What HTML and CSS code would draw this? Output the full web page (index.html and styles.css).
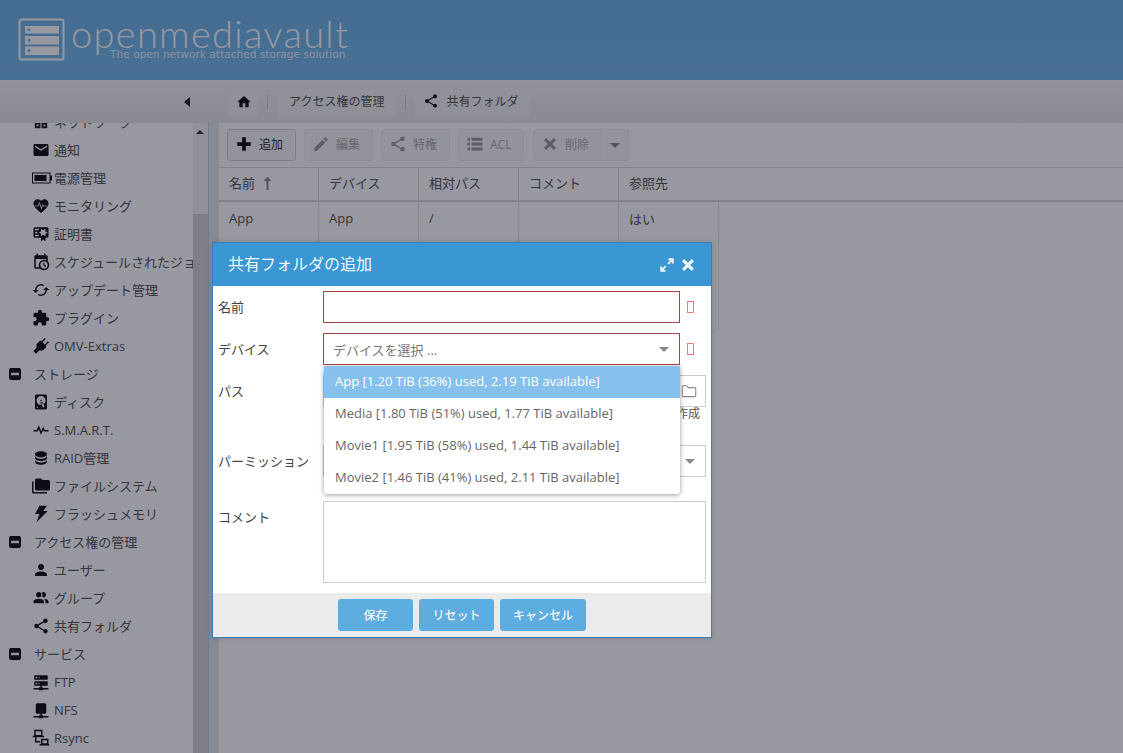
FILE: index.html
```html
<!DOCTYPE html>
<html lang="ja">
<head>
  <meta charset="UTF-8">
  <title>openmediavault</title>
  <link rel="stylesheet" href="styles.css">
</head>
<body>
  <svg class="sprite" aria-hidden="true">
    <symbol id="i-share" viewBox="0 0 24 24"><path d="M18,16.08C17.24,16.08 16.56,16.38 16.04,16.85L8.91,12.7C8.96,12.47 9,12.24 9,12C9,11.76 8.96,11.53 8.91,11.3L15.96,7.19C16.5,7.69 17.21,8 18,8A3,3 0 0,0 21,5A3,3 0 0,0 18,2A3,3 0 0,0 15,5C15,5.24 15.04,5.47 15.09,5.7L8.04,9.81C7.5,9.31 6.79,9 6,9A3,3 0 0,0 3,12A3,3 0 0,0 6,15C6.79,15 7.5,14.69 8.04,14.19L15.16,18.34C15.11,18.55 15.08,18.77 15.08,19C15.08,20.61 16.39,21.91 18,21.91C19.61,21.91 20.92,20.61 20.92,19A2.92,2.92 0 0,0 18,16.08Z"/></symbol>
    <symbol id="i-minus" viewBox="0 0 14 14"><path fill-rule="evenodd" d="M3,1H11A2,2 0 0,1 13,3V11A2,2 0 0,1 11,13H3A2,2 0 0,1 1,11V3A2,2 0 0,1 3,1ZM3,5.8V8.2H11V5.8Z"/></symbol>
    <symbol id="i-close" viewBox="0 0 24 24"><path d="M20 6.91L17.09 4L12 9.09L6.91 4L4 6.91L9.09 12L4 17.09L6.91 20L12 14.91L17.09 20L20 17.09L14.91 12L20 6.91Z"/></symbol>
  </svg>

  <!-- Header -->
  <header class="top-bar">
    <svg class="logo-mark" width="48" height="44" viewBox="0 0 48 44">
      <rect x="1.5" y="1.5" width="44" height="40" rx="2" fill="none" stroke="#fff" stroke-width="2"/>
      <path fill="#fff" fill-rule="evenodd" d="M7,8H41V15.5H7ZM11,10.2a1.5,1.5 0 1,0 .01,0ZM7,18H41V26.5H7ZM11,20.7a1.5,1.5 0 1,0 .01,0ZM7,28.5H41V37H7ZM11,31.2a1.5,1.5 0 1,0 .01,0Z"/>
    </svg>
    <div class="logo-text">
      <span class="logo-name">openmediavault</span>
      <span class="logo-tag">The open network attached storage solution</span>
    </div>
  </header>

  <div class="workspace">
    <!-- Sidebar -->
    <aside class="sidebar">
      <div class="collapse-bar"><span class="collapse-arrow"></span></div>
      <div class="nav-box">
        <ul class="nav-list">
          <li class="nav-item"><svg class="nav-icon" viewBox="0 0 24 24"><path fill="none" stroke="currentColor" stroke-width="2.4" d="M5 14h5v5H5zM14 14h5v5h-5z"/></svg><span>ネットワーク</span></li>
          <li class="nav-item"><svg class="nav-icon" viewBox="0 0 24 24"><path d="M20 4H4c-1.1 0-1.99.9-1.99 2L2 18c0 1.1.9 2 2 2h16c1.1 0 2-.9 2-2V6c0-1.1-.9-2-2-2zm0 4l-8 5-8-5V6l8 5 8-5v2z"/></svg><span>通知</span></li>
          <li class="nav-item"><svg class="nav-icon battery" viewBox="0 0 22 12"><path fill-rule="evenodd" d="M1,.5H19.5V3.5H21V8.5H19.5V11.5H1ZM2,1.5V10.5H18.5V1.5ZM3.5,3H15.5V9H3.5Z"/></svg><span>電源管理</span></li>
          <li class="nav-item"><svg class="nav-icon" viewBox="0 0 24 24"><path d="M12,21.35L10.55,20.03C5.4,15.36 2,12.27 2,8.5C2,5.41 4.42,3 7.5,3C9.24,3 10.91,3.81 12,5.08C13.09,3.81 14.76,3 16.5,3C19.58,3 22,5.41 22,8.5C22,12.27 18.6,15.36 13.45,20.03Z"/><path class="pulse-line" d="M3 12h5l2-4 2.5 7 2-4.5 1 1.5h5"/></svg><span>モニタリング</span></li>
          <li class="nav-item"><svg class="nav-icon" viewBox="0 0 24 24"><path d="M4,3C2.89,3 2,3.89 2,5V15A2,2 0 0,0 4,17H12V22L15,19L18,22V17H20A2,2 0 0,0 22,15V8L22,6V5A2,2 0 0,0 20,3H16V3H4M12,5L15,7L18,5V8.5L21,10L18,11.5V15L15,13L12,15V11.5L9,10L12,8.5V5M4,5H9V7H4V5M4,9H7V11H4V9M4,13H9V15H4V13Z"/></svg><span>証明書</span></li>
          <li class="nav-item"><svg class="nav-icon" viewBox="0 0 24 24"><path d="M15,13H16.5V15.82L18.94,17.23L18.19,18.53L15,16.69V13M19,8H5V19H9.67C9.24,18.09 9,17.07 9,16A7,7 0 0,1 16,9C17.07,9 18.09,9.24 19,9.67V8M5,21C3.89,21 3,20.1 3,19V5C3,3.89 3.89,3 5,3H6V1H8V3H16V1H18V3H19A2,2 0 0,1 21,5V11.1C22.24,12.36 23,14.09 23,16A7,7 0 0,1 16,23C14.09,23 12.36,22.24 11.1,21H5M16,11.15A4.85,4.85 0 0,0 11.15,16C11.15,18.68 13.32,20.85 16,20.85A4.85,4.85 0 0,0 20.85,16C20.85,13.32 18.68,11.15 16,11.15Z"/></svg><span>スケジュールされたジョブ</span></li>
          <li class="nav-item"><svg class="nav-icon" viewBox="0 0 24 24"><path transform="rotate(90 12 12)" d="M12,18A6,6 0 0,1 6,12C6,11 6.25,10.03 6.7,9.2L5.24,7.74C4.46,8.97 4,10.43 4,12A8,8 0 0,0 12,20V23L16,19L12,15M12,4V1L8,5L12,9V6A6,6 0 0,1 18,12C18,13 17.75,13.97 17.3,14.8L18.76,16.26C19.54,15.03 20,13.57 20,12A8,8 0 0,0 12,4Z"/></svg><span>アップデート管理</span></li>
          <li class="nav-item"><svg class="nav-icon" viewBox="0 0 24 24"><path d="M20.5,11H19V7C19,5.89 18.1,5 17,5H13V3.5A2.5,2.5 0 0,0 10.5,1A2.5,2.5 0 0,0 8,3.5V5H4A2,2 0 0,0 2,7V10.8H3.5C5,10.8 6.2,12 6.2,13.5C6.2,15 5,16.2 3.5,16.2H2V20A2,2 0 0,0 4,22H7.8V20.5C7.8,19 9,17.8 10.5,17.8C12,17.8 13.2,19 13.2,20.5V22H17A2,2 0 0,0 19,20V16H20.5A2.5,2.5 0 0,0 23,13.5A2.5,2.5 0 0,0 20.5,11Z"/></svg><span>プラグイン</span></li>
          <li class="nav-item latin"><svg class="nav-icon" viewBox="0 0 24 24"><path transform="rotate(45 12 12)" d="M16,7V1H14V7H10V1H8V7C7,7 6,8 6,9V14.5L9.5,18V24H14.5V18L18,14.5V9C18,8 17,7 16,7Z"/></svg><span>OMV-Extras</span></li>
          <li class="nav-item group"><svg class="group-icon"><use href="#i-minus"/></svg><span>ストレージ</span></li>
          <li class="nav-item"><svg class="nav-icon" viewBox="0 0 24 24"><path d="M6,2H18A2,2 0 0,1 20,4V20A2,2 0 0,1 18,22H6A2,2 0 0,1 4,20V4A2,2 0 0,1 6,2M12,4A6,6 0 0,0 6,10C6,13.31 8.69,16 12.1,16L11.22,13.77C10.95,13.29 11.11,12.68 11.59,12.4L12.45,11.9C12.93,11.63 13.54,11.79 13.82,12.27L15.74,14.69C17.12,13.59 18,11.9 18,10A6,6 0 0,0 12,4M12,9A1,1 0 0,1 13,10A1,1 0 0,1 12,11A1,1 0 0,1 11,10A1,1 0 0,1 12,9M7,18A1,1 0 0,0 6,19A1,1 0 0,0 7,20A1,1 0 0,0 8,19A1,1 0 0,0 7,18M12.09,13.27L14.58,19.58L17.17,18.08L12.95,12.77L12.09,13.27Z"/></svg><span>ディスク</span></li>
          <li class="nav-item latin"><svg class="nav-icon" viewBox="0 0 24 24"><path class="pulse-stroke" d="M2 13h5l2-5 3 8 3-6 1.5 3H22"/></svg><span>S.M.A.R.T.</span></li>
          <li class="nav-item"><svg class="nav-icon" viewBox="0 0 24 24"><path d="M12,3C7.58,3 4,4.79 4,7C4,9.21 7.58,11 12,11C16.42,11 20,9.21 20,7C20,4.79 16.42,3 12,3M4,9V12C4,14.21 7.58,16 12,16C16.42,16 20,14.21 20,12V9C20,11.21 16.42,13 12,13C7.58,13 4,11.21 4,9M4,14V17C4,19.21 7.58,21 12,21C16.42,21 20,19.21 20,17V14C20,16.21 16.42,18 12,18C7.58,18 4,16.21 4,14Z"/></svg><span>RAID管理</span></li>
          <li class="nav-item"><svg class="nav-icon" viewBox="0 0 24 24"><path d="M22,4H14L12,2H6A2,2 0 0,0 4,4V16A2,2 0 0,0 6,18H22A2,2 0 0,0 24,16V6A2,2 0 0,0 22,4M2,6H0V20A2,2 0 0,0 2,22H20V20H2V6Z"/></svg><span>ファイルシステム</span></li>
          <li class="nav-item"><svg class="nav-icon" viewBox="0 0 24 24"><path d="M10,1H20L15,8H21L6,23L10,12H4Z"/></svg><span>フラッシュメモリ</span></li>
          <li class="nav-item group"><svg class="group-icon"><use href="#i-minus"/></svg><span>アクセス権の管理</span></li>
          <li class="nav-item"><svg class="nav-icon" viewBox="0 0 24 24"><path d="M12,4A4,4 0 0,1 16,8A4,4 0 0,1 12,12A4,4 0 0,1 8,8A4,4 0 0,1 12,4M12,14C16.42,14 20,15.79 20,18V20H4V18C4,15.79 7.58,14 12,14Z"/></svg><span>ユーザー</span></li>
          <li class="nav-item"><svg class="nav-icon" viewBox="0 0 24 24"><path d="M16 17V19H2V17S2 13 9 13 16 17 16 17M12.5 7.5A3.5 3.5 0 1 0 9 11A3.5 3.5 0 0 0 12.5 7.5M15.94 13A5.32 5.32 0 0 1 18 17V19H22V17S22 13.37 15.94 13M15 4A3.39 3.39 0 0 0 13.07 4.59A5 5 0 0 1 13.07 10.41A3.39 3.39 0 0 0 15 11A3.5 3.5 0 0 0 15 4Z"/></svg><span>グループ</span></li>
          <li class="nav-item"><svg class="nav-icon"><use href="#i-share"/></svg><span>共有フォルダ</span></li>
          <li class="nav-item group"><svg class="group-icon"><use href="#i-minus"/></svg><span>サービス</span></li>
          <li class="nav-item latin"><svg class="nav-icon" viewBox="0 0 24 24"><path d="M13,19H14A1,1 0 0,1 15,20H22V22H15A1,1 0 0,1 14,23H10A1,1 0 0,1 9,22H2V20H9A1,1 0 0,1 10,19H11V17H4A1,1 0 0,1 3,16V12A1,1 0 0,1 4,11H20A1,1 0 0,1 21,12V16A1,1 0 0,1 20,17H13V19M4,3H20A1,1 0 0,1 21,4V8A1,1 0 0,1 20,9H4A1,1 0 0,1 3,8V4A1,1 0 0,1 4,3M9,7H10V5H9V7M9,15H10V13H9V15M5,5V7H7V5H5M5,13V15H7V13H5Z"/></svg><span>FTP</span></li>
          <li class="nav-item latin"><svg class="nav-icon" viewBox="0 0 24 24"><path d="M15,20A1,1 0 0,0 14,19H13V17H17A2,2 0 0,0 19,15V5A2,2 0 0,0 17,3H7A2,2 0 0,0 5,5V15A2,2 0 0,0 7,17H11V19H10A1,1 0 0,0 9,20H2V22H9A1,1 0 0,0 10,23H14A1,1 0 0,0 15,22H22V20H15Z"/></svg><span>NFS</span></li>
          <li class="nav-item latin"><svg class="nav-icon" viewBox="0 0 24 24"><path fill="none" stroke="currentColor" stroke-width="2" d="M4 2h9v7H4zM13 14h8v6h-8zM5 11v6h6"/><path d="M1 9h15v2H1zM10 20h13v2H10z"/></svg><span>Rsync</span></li>
        </ul>
        <div class="scrollbar">
          <span class="scroll-arrow"></span>
          <div class="scroll-thumb"></div>
        </div>
      </div>
    </aside>

    <!-- Main area -->
    <main class="main">
      <nav class="breadcrumb">
        <a class="crumb home"><svg width="16" height="16" viewBox="0 0 24 24"><path d="M10,20V14H14V20H19V12H22L12,3L2,12H5V20H10Z"/></svg></a>
        <span class="crumb-sep"></span>
        <a class="crumb">アクセス権の管理</a>
        <span class="crumb-sep"></span>
        <a class="crumb with-icon"><svg class="crumb-share" width="16" height="16"><use href="#i-share"/></svg>共有フォルダ</a>
      </nav>

      <section class="panel">
        <div class="toolbar">
          <button class="tool-btn"><svg width="18" height="18" viewBox="0 0 24 24"><path d="M21,14.5H14.5V21H9.5V14.5H3V9.5H9.5V3H14.5V9.5H21Z"/></svg>追加</button>
          <button class="tool-btn off"><svg width="18" height="18" viewBox="0 0 24 24"><path d="M20.71,7.04C21.1,6.65 21.1,6 20.71,5.63L18.37,3.29C18,2.9 17.35,2.9 16.96,3.29L15.12,5.12L18.87,8.87M3,17.25V21H6.75L17.81,9.93L14.06,6.18L3,17.25Z"/></svg>編集</button>
          <button class="tool-btn off"><svg width="18" height="18"><use href="#i-share"/></svg>特権</button>
          <button class="tool-btn off w-acl"><svg width="18" height="18" viewBox="0 0 24 24"><path d="M2 3.5h3.5v4H2zM7.5 3.5H22v4H7.5zM2 10h3.5v4H2zM7.5 10H22v4H7.5zM2 16.5h3.5v4H2zM7.5 16.5H22v4H7.5z"/></svg>ACL</button>
          <div class="tool-btn off split">
            <span class="split-main"><svg width="18" height="18"><use href="#i-close"/></svg>削除</span>
            <span class="split-arrow"><span class="caret"></span></span>
          </div>
        </div>

        <table class="grid">
          <thead>
            <tr>
              <th>名前 <svg class="sort-arrow" width="9" height="13" viewBox="0 0 9 13"><path d="M4.5,0L8.5,4H5.5V13H3.5V4H0.5Z"/></svg></th>
              <th>デバイス</th>
              <th>相対パス</th>
              <th>コメント</th>
              <th class="last">参照先</th>
              <th class="filler"></th>
            </tr>
          </thead>
          <tbody>
            <tr><td>App</td><td>App</td><td>/</td><td></td><td>はい</td></tr>
            <tr><td></td><td></td><td></td><td></td><td></td></tr>
            <tr><td></td><td></td><td></td><td></td><td></td></tr>
            <tr><td></td><td></td><td></td><td></td><td></td></tr>
          </tbody>
        </table>
      </section>
    </main>
  </div>

  <div class="mask"></div>

  <!-- Add shared folder dialog -->
  <div class="dialog">
    <div class="dialog-head">
      <h2>共有フォルダの追加</h2>
      <div class="dialog-tools">
        <svg width="18" height="18" viewBox="0 0 24 24"><path d="M10,21V18.5H7.2L11.4,14.3L9.7,12.6L5.5,16.8V14H3V21H10M14.3,11.4L18.5,7.2V10H21V3H14V5.5H16.8L12.6,9.7L14.3,11.4Z"/></svg>
        <svg width="18" height="18"><use href="#i-close"/></svg>
      </div>
    </div>

    <div class="dialog-body">
      <div class="form-row">
        <label>名前</label>
        <div class="field bad"></div>
        <span class="err-slot"><i class="err-mark"></i></span>
      </div>
      <div class="form-row">
        <label>デバイス</label>
        <div class="field bad select placeholder">デバイスを選択 ...<span class="caret"></span></div>
        <span class="err-slot"><i class="err-mark"></i></span>
      </div>
      <div class="form-row">
        <label>パス</label>
        <div class="field folder"><svg width="18" height="18" viewBox="0 0 24 24"><path fill="none" stroke="#888" stroke-width="1.4" d="M3 6.5A1.5 1.5 0 0 1 4.5 5H9l2 2.5h8.5A1.5 1.5 0 0 1 21 9v9a1.5 1.5 0 0 1-1.5 1.5h-15A1.5 1.5 0 0 1 3 18Z"/></svg></div>
      </div>
      <div class="form-hint">作成</div>
      <div class="form-row row-perm">
        <label>パーミッション</label>
        <div class="field select"><span class="caret"></span></div>
      </div>
      <div class="form-row">
        <label>コメント</label>
        <div class="field textarea"></div>
      </div>
    </div>

    <div class="dialog-foot">
      <button class="foot-btn">保存</button>
      <button class="foot-btn">リセット</button>
      <button class="foot-btn wide">キャンセル</button>
    </div>

    <ul class="dropdown">
      <li class="active">App [1.20 TiB (36%) used, 2.19 TiB available]</li>
      <li>Media [1.80 TiB (51%) used, 1.77 TiB available]</li>
      <li>Movie1 [1.95 TiB (58%) used, 1.44 TiB available]</li>
      <li>Movie2 [1.46 TiB (41%) used, 2.11 TiB available]</li>
    </ul>
  </div>
</body>
</html>
```

FILE: styles.css
```css
* {
  margin: 0;
  padding: 0;
  box-sizing: border-box;
  font-family: "Open Sans", "Noto Sans CJK JP", sans-serif;
}
body {
  position: relative;
  width: 1123px;
  height: 753px;
  overflow: hidden;
  font-size: 13px;
  color: #333;
  background: #fff;
}
ul {
  list-style: none;
}
svg {
  fill: currentColor;
  flex: none;
}
.sprite {
  display: none;
}

/* Header */
.top-bar {
  display: flex;
  align-items: flex-start;
  height: 80px;
  padding: 18px 0 0 18px;
  background: linear-gradient(#6fb2e4, #78bcea);
}
.logo-mark {
  margin-right: 5px;
}
.logo-text {
  position: relative;
  color: #fff;
}
.logo-name {
  display: block;
  font-family: Lato, sans-serif;
  font-weight: 300;
  font-size: 38px;
  letter-spacing: 1.3px;
  line-height: 31px;
}
.logo-tag {
  position: absolute;
  right: 4px;
  top: 29px;
  white-space: nowrap;
  font-family: "DejaVu Sans", sans-serif;
  font-size: 10.6px;
  line-height: 14px;
  color: rgba(255, 255, 255, 0.85);
}

/* Sidebar */
.workspace {
  display: flex;
  height: 673px;
  background: linear-gradient(#f4f4f4, #e6e6e4 43px);
}
.sidebar {
  width: 209px;
  flex: none;
}
.collapse-bar {
  display: flex;
  justify-content: flex-end;
  align-items: center;
  height: 43px;
  padding-right: 19px;
}
.collapse-arrow {
  border-style: solid;
  border-width: 5px 6px 5px 0;
  border-color: transparent #222 transparent transparent;
}
.nav-box {
  display: flex;
  height: 630px;
  background: #fff;
  border-right: 1px solid #b0d0f0;
  overflow: hidden;
}
.nav-list {
  width: 193px;
  margin-top: -15px;
  flex: none;
  overflow: hidden;
}
.nav-item {
  display: flex;
  align-items: center;
  height: 28px;
  padding-left: 31px;
  white-space: nowrap;
  color: #555;
}
.nav-item span {
  margin-bottom: 2px;
}
.nav-item.latin span {
  margin-bottom: 0;
}
.nav-icon {
  width: 18px;
  height: 18px;
  margin-right: 4px;
  margin-left: 1px;
  color: #111;
}
.battery {
  width: 22px;
  height: 12px;
  margin-left: 0;
  margin-right: 1px;
}
.pulse-line {
  fill: none;
  stroke: #b0b0b0;
  stroke-width: 1.6;
}
.pulse-stroke {
  fill: none;
  stroke: currentColor;
  stroke-width: 2;
}
.group {
  padding-left: 8px;
}
.group-icon {
  width: 14px;
  height: 14px;
  margin-right: 12px;
  color: #111;
}
.scrollbar {
  position: relative;
  width: 15px;
  background: #f2f2f2;
}
.scroll-arrow {
  position: absolute;
  left: 3px;
  top: 7px;
  border-style: solid;
  border-width: 0 4px 4px 4px;
  border-color: transparent transparent #333 transparent;
}
.scroll-thumb {
  margin-top: 91px;
  height: 539px;
  background: #d2d2d2;
}

/* Main area */
.main {
  flex: 1;
  margin-left: 10px;
  min-width: 0;
}
.breadcrumb {
  display: flex;
  align-items: flex-start;
  gap: 9px;
  height: 43px;
  padding: 6px 0 0 9px;
}
.crumb {
  display: flex;
  align-items: center;
  height: 31px;
  padding: 0 12px 2px;
  background: #f1f1f1;
  border-radius: 3px;
  font-size: 12px;
  color: #555;
}
.home {
  width: 30px;
  padding: 0 0 0 8px;
  color: #111;
}
.with-icon {
  padding-left: 8px;
}
.crumb-share {
  margin-right: 7px;
  color: #111;
}
.crumb-sep {
  width: 1px;
  height: 14px;
  margin-top: 9px;
  background: #ccc;
}
.panel {
  height: 630px;
  background: #fff;
}
.toolbar {
  display: flex;
  gap: 8px;
  height: 45px;
  padding: 6px 0 0 8px;
  background: #fdfdfd;
  border-bottom: 1px solid #dcdcdc;
}
.tool-btn {
  display: flex;
  align-items: center;
  gap: 6px;
  width: 69px;
  height: 32px;
  padding: 0 0 2px 7px;
  background: #f7f7f7;
  border: 1px solid #d0d0d0;
  border-radius: 3px;
  font-size: 12px;
  color: #333;
}
.tool-btn svg {
  color: #111;
}
.w-acl {
  width: 66px;
}
.off {
  color: #aaa;
  border-color: #eee;
}
.off svg {
  color: #999;
}
.split {
  width: 96px;
  margin-left: 1px;
  padding: 0;
  gap: 0;
}
.split-main {
  display: flex;
  align-items: center;
  gap: 6px;
  width: 67px;
  height: 100%;
  padding: 0 0 2px 7px;
  border-right: 1px solid #eee;
}
.split-arrow {
  display: flex;
  align-items: center;
  justify-content: center;
  flex: 1;
}
.caret {
  display: inline-block;
  border-style: solid;
  border-width: 5px 5px 0 5px;
  border-color: #888 transparent transparent transparent;
}

/* Grid */
.grid {
  width: 100%;
  border-collapse: separate;
  border-spacing: 0;
  table-layout: fixed;
  color: #555;
}
.grid th {
  width: 100px;
  height: 34px;
  padding: 0 0 3px 10px;
  text-align: left;
  font-weight: normal;
  border-right: 1px solid #dcdcdc;
  border-bottom: 2px solid #d8d8d8;
}
.grid th.last {
  border-right: 0;
}
.grid th.filler {
  width: auto;
  border-right: 0;
}
.grid td {
  height: 32px;
  padding-left: 10px;
  border-right: 1px solid #e6e6e6;
}
.sort-arrow {
  margin-left: 5px;
  vertical-align: -2px;
  color: #888;
}

/* Page dimming under the dialog */
.mask {
  position: absolute;
  inset: 0;
  background: rgba(10, 10, 30, 0.42);
}

/* Dialog */
.dialog {
  position: absolute;
  left: 212px;
  top: 242px;
  width: 500px;
  height: 396px;
  background: #fff;
  border: 1px solid #3f7db8;
  box-shadow: 0 0 6px rgba(0, 0, 0, 0.15);
}
.dialog-head {
  display: flex;
  align-items: center;
  justify-content: space-between;
  height: 43px;
  padding: 0 14px 3px 15px;
  background: #3a97d3;
  color: #f2f6fa;
}
.dialog-head h2 {
  font-size: 16px;
  font-weight: 400;
}
.dialog-tools {
  display: flex;
  gap: 3px;
  margin-top: 3px;
}
.dialog-body {
  height: 307px;
  padding: 5px 5px 0;
}
.form-row {
  display: flex;
  margin-bottom: 10px;
}
.form-row label {
  width: 105px;
  flex: none;
  line-height: 32px;
  color: #444;
}
.field {
  flex: 1;
  height: 32px;
  border: 1px solid #ccc;
}
.bad {
  border-color: #a94442;
}
.err-slot {
  display: flex;
  align-items: center;
  width: 26px;
  flex: none;
  height: 32px;
  padding-left: 7px;
}
.err-mark {
  display: block;
  width: 7px;
  height: 12px;
  border: 1px solid #f27a78;
}
.select {
  display: flex;
  align-items: center;
  justify-content: flex-end;
  padding-right: 10px;
}
.placeholder {
  justify-content: space-between;
  padding-left: 9px;
  color: #777;
}
.folder {
  display: flex;
  align-items: center;
  justify-content: flex-end;
  padding-right: 7px;
}
.form-hint {
  height: 28px;
  margin-top: -10px;
  margin-bottom: 10px;
  padding-right: 6px;
  text-align: right;
  font-size: 12px;
  line-height: 14px;
  color: #555;
}
.row-perm {
  margin-bottom: 24px;
}
.textarea {
  height: 82px;
}
.dialog-foot {
  display: flex;
  justify-content: center;
  gap: 6px;
  height: 44px;
  padding-top: 6px;
  background: #ebebeb;
}
.foot-btn {
  width: 75px;
  height: 32px;
  background: #5dade0;
  border: 0;
  border-radius: 3px;
  font-size: 12px;
  font-weight: 500;
  color: #f4f4f4;
}
.wide {
  width: 86px;
}

/* Device dropdown */
.dropdown {
  position: absolute;
  left: 111px;
  top: 123px;
  width: 356px;
  background: #fff;
  box-shadow: 0 1px 5px rgba(0, 0, 0, 0.4);
  border-radius: 0 0 3px 3px;
}
.dropdown li {
  height: 32px;
  padding-left: 11px;
  line-height: 30px;
  font-size: 13px;
  white-space: nowrap;
  color: #666;
}
.dropdown .active {
  background: #85c1ec;
  color: #fff;
}
```
